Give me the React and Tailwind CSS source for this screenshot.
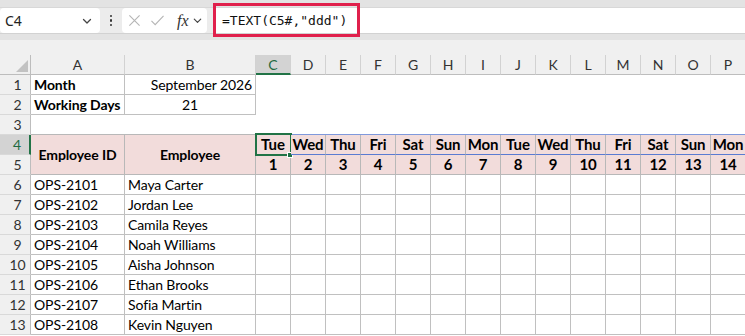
import React from "react";

const COLS = ["A", "B", "C", "D", "E", "F", "G", "H", "I", "J", "K", "L", "M", "N", "O", "P"];
const DAYS = ["Tue", "Wed", "Thu", "Fri", "Sat", "Sun", "Mon", "Tue", "Wed", "Thu", "Fri", "Sat", "Sun", "Mon"];
const PEOPLE = [
  ["OPS-2101", "Maya Carter"],
  ["OPS-2102", "Jordan Lee"],
  ["OPS-2103", "Camila Reyes"],
  ["OPS-2104", "Noah Williams"],
  ["OPS-2105", "Aisha Johnson"],
  ["OPS-2106", "Ethan Brooks"],
  ["OPS-2107", "Sofia Martin"],
  ["OPS-2108", "Kevin Nguyen"],
];

const cellFont = { fontFamily: "Lato, 'Liberation Sans', sans-serif" };

function RowHead({ n, active }) {
  return (
    <div
      className={`h-[20px] flex items-center justify-center pl-[5px] text-[14px] border-b border-[#d9d9d9] ${
        active
          ? "bg-[#d3d3d3] text-[#1f6b42] border-r-2 border-r-[#217346]"
          : "bg-[#f0f0f0] text-[#333] border-r border-r-[#bdbdbd]"
      }`}
    >
      {n}
    </div>
  );
}

function Chevron({ className }) {
  return (
    <svg className={className} viewBox="0 0 12 12" fill="none" stroke="#444" strokeWidth="1.3" strokeLinecap="round" strokeLinejoin="round">
      <polyline points="2.5 4.5 6 8 9.5 4.5" />
    </svg>
  );
}

export default function App() {
  return (
    <div className="w-[745px] h-[336px] overflow-hidden bg-white relative" style={cellFont}>
      {/* formula bar */}
      <div className="bg-[#ebebeb]">
        <div className="h-[8px] bg-[#e3e3e3] border-b border-[#d8d8d8]" />
        <div className="h-[25px] flex items-stretch bg-[#ececec]" style={{ fontFamily: "'Noto Sans', sans-serif" }}>
          <div className="w-[100px] bg-white rounded-[4px] flex items-center justify-between pl-[5px] pr-[7px] text-[14px] text-[#222]">
            <span>C4</span>
            <Chevron className="w-[12px] h-[12px]" />
          </div>
          <div className="w-[22px] flex flex-col items-center justify-center gap-[2px]">
            <span className="w-[2.5px] h-[2.5px] bg-[#333] rounded-full" />
            <span className="w-[2.5px] h-[2.5px] bg-[#333] rounded-full" />
            <span className="w-[2.5px] h-[2.5px] bg-[#333] rounded-full" />
          </div>
          <div className="w-[85px] bg-white rounded-[4px] flex items-center pl-[6px] gap-[9px]">
            <svg className="w-[13px] h-[13px]" viewBox="0 0 14 14" fill="none" stroke="#b5b5b5" strokeWidth="1.2">
              <path d="M1.5 1.5 12.5 12.5M12.5 1.5 1.5 12.5" />
            </svg>
            <svg className="w-[15px] h-[13px]" viewBox="0 0 16 14" fill="none" stroke="#b5b5b5" strokeWidth="1.2">
              <path d="M1.5 7.5 5.5 11.5 14.5 2" />
            </svg>
            <span className="ml-[3px] italic text-[16px] text-[#333] leading-none" style={{ fontFamily: "'Liberation Serif', serif" }}>
              fx
            </span>
            <Chevron className="w-[11px] h-[11px] -ml-[6px]" />
          </div>
          <div className="flex-1 ml-[6px] bg-white flex items-center pl-[9px] text-[13px] text-[#111]" style={{ fontFamily: "'DejaVu Sans Mono', monospace" }}>
            =TEXT(C5#,"ddd")
          </div>
        </div>
        <div className="h-[7px] bg-[#e3e3e3] border-t border-[#d2d2d2]" />
        <div className="h-[15px] bg-[#f0f0f0]" />
      </div>

      {/* red annotation */}
      <div className="absolute left-[213px] top-[3px] w-[147px] h-[34px] border-[3px] border-[#e0204c]" />

      {/* sheet */}
      <div className="grid grid-cols-[31px_94px_131px_repeat(14,35px)] text-[14px] tracking-[-0.1px] text-black whitespace-nowrap">
        {/* column header */}
        <div className="h-[20px] bg-[#f0f0f0] border-r border-b border-[#bdbdbd] relative">
          <div
            className="absolute right-[2px] bottom-[2px] w-[12px] h-[12px] bg-[#c2c2c2]"
            style={{ clipPath: "polygon(100% 0, 100% 100%, 0 100%)" }}
          />
        </div>
        {COLS.map((c) => (
          <div
            key={c}
            className={`h-[20px] flex items-center justify-center text-[14px] border-r border-r-[#d2d2d2] ${
              c === "C"
                ? "bg-[#d3d3d3] text-[#1f6b42] border-b-2 border-b-[#217346]"
                : "bg-[#f0f0f0] text-[#333] border-b border-b-[#bdbdbd]"
            }`}
          >
            {c}
          </div>
        ))}

        {/* row 1 */}
        <RowHead n={1} />
        <div className="h-[20px] flex items-center px-[3px] font-bold border-r border-b border-[#c0c0c0]">Month</div>
        <div className="h-[20px] flex items-center justify-end px-[3px] border-r border-b border-[#c0c0c0]">September 2026</div>
        {DAYS.map((_, i) => (
          <div key={i} className="h-[20px]" />
        ))}

        {/* row 2 */}
        <RowHead n={2} />
        <div className="h-[20px] flex items-center px-[3px] font-bold border-r border-b border-[#c0c0c0]">Working Days</div>
        <div className="h-[20px] flex items-center justify-center border-r border-b border-[#c0c0c0]">21</div>
        {DAYS.map((_, i) => (
          <div key={i} className="h-[20px]" />
        ))}

        {/* row 3 */}
        <RowHead n={3} />
        <div className="h-[20px] border-b border-[#b8b8b8]" />
        <div className="h-[20px] border-b border-[#b8b8b8]" />
        {DAYS.map((_, i) => (
          <div key={i} className="h-[20px] border-b border-[#7f99dc]" />
        ))}

        {/* rows 4-5 */}
        <div className="row-span-2 grid grid-rows-[20px_20px]">
          <RowHead n={4} active />
          <RowHead n={5} />
        </div>
        <div className="row-span-2 h-[40px] bg-[#f2dcdb] flex items-center justify-center font-bold border-r border-b border-[#b8b8b8]">
          Employee ID
        </div>
        <div className="row-span-2 h-[40px] bg-[#f2dcdb] flex items-center justify-center font-bold border-r border-b border-[#b8b8b8]">
          Employee
        </div>
        {DAYS.map((d, i) => (
          <div
            key={i}
            className="h-[20px] bg-[#f2dcdb] relative flex items-center justify-center font-bold text-[15px] border-r border-r-[#b8b8b8] border-b border-b-[#5a7bd2]"
          >
            {d}
            {i === 0 && (
              <>
                <div className="absolute -left-[1px] -top-[2px] w-[37px] h-[23px] border-2 border-[#217346]" />
                <div className="absolute -right-[3px] -bottom-[4px] w-[6px] h-[6px] bg-[#217346] border border-white" />
              </>
            )}
          </div>
        ))}
        {DAYS.map((_, i) => (
          <div
            key={i}
            className="h-[20px] bg-[#f2dcdb] flex items-center justify-center font-bold text-[15px] border-r border-b border-[#b8b8b8]"
          >
            {i + 1}
          </div>
        ))}

        {/* data rows */}
        {PEOPLE.map(([id, name], r) => (
          <React.Fragment key={id}>
            <RowHead n={r + 6} />
            <div className="h-[20px] flex items-center px-[3px] border-r border-b border-[#c0c0c0]">{id}</div>
            <div className="h-[20px] flex items-center px-[3px] border-r border-b border-[#c0c0c0]">{name}</div>
            {DAYS.map((_, i) => (
              <div key={i} className="h-[20px] border-r border-b border-[#c0c0c0]" />
            ))}
          </React.Fragment>
        ))}
      </div>
    </div>
  );
}
